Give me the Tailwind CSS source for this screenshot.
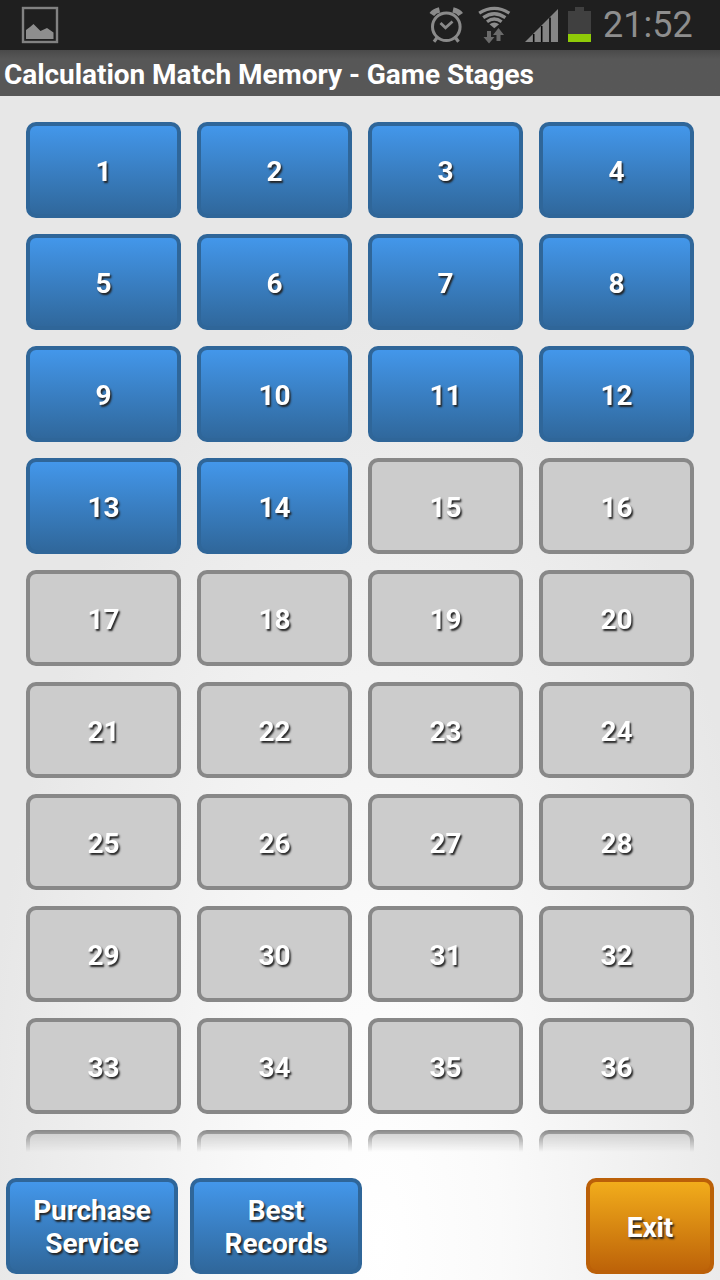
<!DOCTYPE html>
<html lang="en">
<head>
    <meta charset="UTF-8">
    <meta name="viewport" content="width=device-width, initial-scale=1.0">
    <title>Calculation Match Memory - Game Stages</title>
    <script src="https://cdn.jsdelivr.net/npm/@tailwindcss/browser@4"></script>
</head>
<body class="w-[720px] h-[1280px] overflow-hidden flex flex-col font-['Roboto',sans-serif] text-white bg-[#e7e7e7]">
    <!-- Status Bar -->
    <div class="h-[50px] shrink-0 bg-[#1f1f1f] flex items-center justify-between pl-[21px] pr-7 text-[#8e8e8e]">
        <svg class="w-[38px] h-[38px]" viewBox="0 0 38 38" fill="none">
            <rect x="2" y="2" width="34" height="34" stroke="#828282" stroke-width="2.4"/>
            <path d="M5 33V24L9 21L12.500 18L19.500 25L26 22L32.500 26.500V33Z" fill="#8e8e8e"/>
        </svg>
        <div class="flex items-center">
            <!-- alarm, wifi, signal, battery -->
            <svg class="w-[170px] h-[50px]" viewBox="426 0 170 50" fill="none">
                <g stroke="#8a8a8a">
                    <circle cx="446.300" cy="26.800" r="13.800" stroke-width="3"/>
                    <path d="M440.500 23L445.500 27.800L452.500 21.500" stroke-width="2.800"/>
                    <path d="M437.500 37L434 41.700M455 37L458.500 41.700" stroke-width="3.200"/>
                    <path d="M431.800 14.500Q434 11 439.500 9.800M460.700 14.500Q458.500 11 453 9.800" stroke-width="5.400"/>
                </g>
                <g stroke="#8c8c8c" stroke-width="3.300">
                    <path d="M479.200 13.200Q494.300 3.700 509.400 13.200"/>
                    <path d="M483.200 17.600Q494.300 9.800 505.400 17.600"/>
                    <path d="M487 21.800Q494.300 16.300 501.600 21.800"/>
                </g>
                <path d="M489.500 24.300Q494.300 20.500 499.100 24.300L494.300 28.300Z" fill="#8c8c8c"/>
                <path d="M487 31H491V37H494.500L489 43.500L483.500 37H487Z" fill="#6a6a6a"/>
                <path d="M496.500 41V35H493L498.500 28L504 35H500.500V41Z" fill="#6a6a6a"/>
                <path d="M525 42L558 9V42Z" fill="#858585"/>
                <path d="M533.700 42V34M541.700 42V26M550 42V17.500" stroke="#080808" stroke-width="1.600"/>
                <path d="M568 11H575V7H584V11H591V34H568Z" fill="#404040"/>
                <rect x="568" y="34" width="23" height="8" fill="#8fcb08"/>
            </svg>
            <div class="w-[96px] pl-[7px] text-[36px] leading-[50px] whitespace-nowrap">21:52</div>
        </div>
    </div>

    <!-- Title Bar -->
    <div class="h-[46px] shrink-0 bg-gradient-to-b from-[#4a4a4a] to-[#575757] to-20% pl-1">
        <h1 id="title" class="pt-[2px] text-[28px] leading-[46px] font-bold tracking-[-0.05px] whitespace-nowrap">Calculation Match Memory - Game Stages</h1>
    </div>

    <div class="flex-1 min-h-0 flex flex-col bg-[radial-gradient(ellipse_400px_960px_at_380px_1150px,#ffffff_0%,#fafafa_30%,#e7e7e7_100%)]">
        <!-- Stage Grid -->
        <div class="h-[1056px] shrink-0 overflow-hidden px-[26px] pt-[26px] [mask-image:linear-gradient(to_bottom,#000_1034px,transparent_1056px)]">
            <div id="stageGrid" class="grid grid-cols-4 gap-4"></div>
        </div>

        <!-- Bottom Buttons -->
        <div class="flex gap-3 px-[6px] pt-[26px] text-[28px] leading-[33px] font-bold">
            <button class="w-[172px] h-24 pt-[2px] rounded-[10px] border-4 border-[#2f6699] bg-gradient-to-b from-[#4499ee] to-[#2f6699] bg-origin-border tracking-[-0.1px] [text-shadow:1.5px_1.5px_2px_#222]">Purchase<br>Service</button>
            <button class="w-[172px] h-24 pt-[2px] rounded-[10px] border-4 border-[#2f6699] bg-gradient-to-b from-[#4499ee] to-[#2f6699] bg-origin-border tracking-[-0.1px] [text-shadow:1.5px_1.5px_2px_#222]">Best<br>Records</button>
            <button class="ml-auto w-32 h-24 pt-[2px] rounded-[10px] border-4 border-[#bb6008] bg-gradient-to-b from-[#f4b01c] to-[#bb6008] bg-origin-border tracking-[-0.1px] [text-shadow:1.5px_1.5px_2px_#222]">Exit</button>
        </div>
    </div>

    <script>
const unlockedStages = 14;
const loadedStages = 36;
const totalStages = 40;
const stageGrid = document.getElementById('stageGrid');

const baseClass = 'h-24 rounded-[10px] border-4 text-[28px] leading-8 font-bold pt-[3px] [text-shadow:1.5px_1.5px_2px_#222]';
const unlockedClass = 'border-[#2f6699] bg-gradient-to-b from-[#4499ee] to-[#2f6699] bg-origin-border';
const lockedClass = 'border-[#888888] bg-[#cccccc]';

// Populate the stage buttons, the last row only peeks out and has no numbers yet
for (let stage = 1; stage <= totalStages; stage++) {
    const button = document.createElement('button');
    button.className = baseClass + ' ' + (stage <= unlockedStages ? unlockedClass : lockedClass);
    button.textContent = stage <= loadedStages ? stage : '';
    stageGrid.appendChild(button);
}
    </script>
</body>
</html>
